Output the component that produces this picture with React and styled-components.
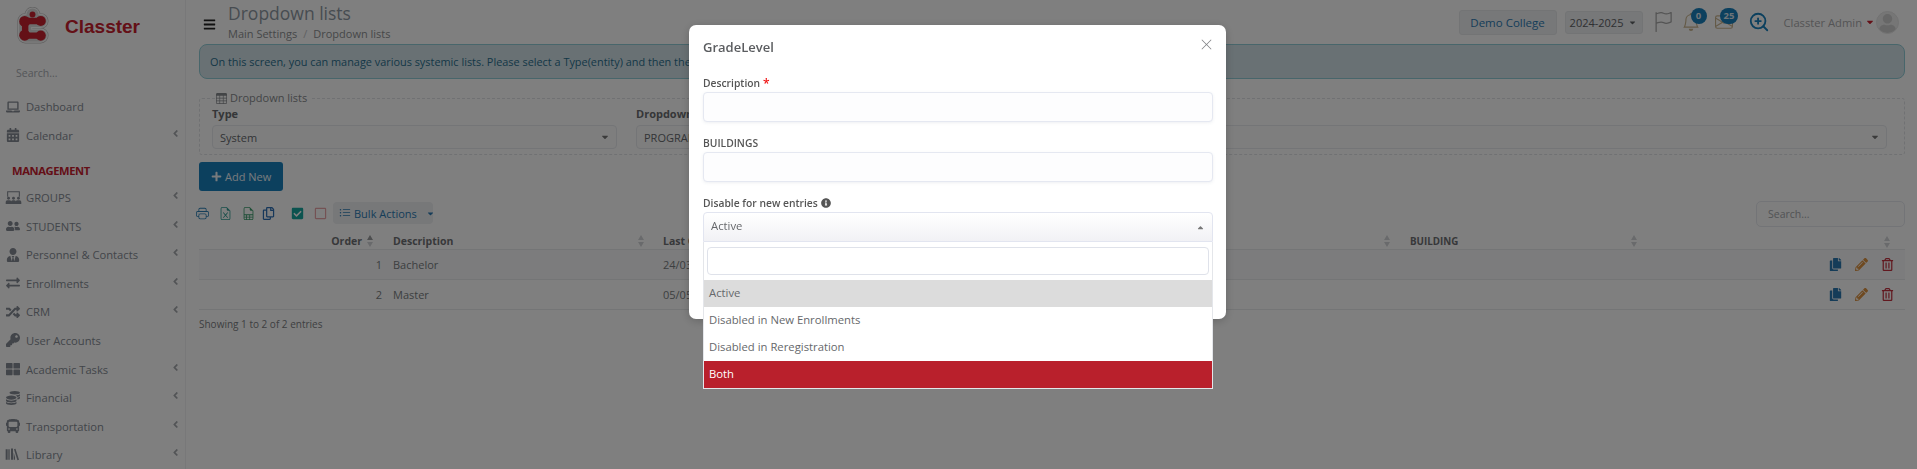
import React from "react";
import styled, { createGlobalStyle } from "styled-components";
import {
  FaAngleLeft,
  FaBars,
  FaBus,
  FaCalendarAlt,
  FaCaretDown,
  FaCaretUp,
  FaCheckSquare,
  FaCoins,
  FaCopy,
  FaExchangeAlt,
  FaInfoCircle,
  FaKey,
  FaLaptop,
  FaPencilAlt,
  FaPlus,
  FaRandom,
  FaRegCopy,
  FaRegSquare,
  FaRegTrashAlt,
  FaThLarge,
  FaUser,
  FaUserFriends,
  FaUserTie,
} from "react-icons/fa";
import {
  BsBell,
  BsEnvelope,
  BsFileEarmarkExcel,
  BsFileEarmarkSpreadsheet,
  BsFlag,
  BsListUl,
  BsPrinter,
  BsTable,
  BsXLg,
} from "react-icons/bs";
import { FiZoomIn } from "react-icons/fi";

const GroupsIcon = (props) => (
  <svg viewBox="0 0 24 18" width="17" height="13" fill="currentColor" {...props}>
    <path d="M3 0h18v8h-1.500V1.500h-15V8H3z" />
    <circle cx="5" cy="10" r="2" />
    <circle cx="12" cy="10" r="2" />
    <circle cx="19" cy="10" r="2" />
    <path d="M1 18v-3a3 3 0 0 1 3-2h2a3 3 0 0 1 3 2v3zM8.500 18v-3a3 3 0 0 1 3-2h1a3 3 0 0 1 3 2v3zM15 18v-3a3 3 0 0 1 3-2h2a3 3 0 0 1 3 2v3z" />
  </svg>
);

const BooksIcon = (props) => (
  <svg viewBox="0 0 24 18" width="16" height="13" fill="currentColor" {...props}>
    <path d="M1 1h3v16H1zM5 1h2v16H5zM9 0h3v17H9zM13.500 1l2.200-.6L21 17l-2.400.6zM13 6l2 7v4h-2z" />
  </svg>
);

const logoPath = "M25 13C20 13 14 13 8 13V29C14 29 20 29 25 29";
const dotPath = "M16 6V7";

const LogoMark = () => (
  <svg viewBox="-2 -2 36 40" width="33" height="37">
    {[
      [17, "#c4c4c4"],
      [15.500, "#fff"],
      [13, "#dcdcdc"],
    ].map(([w, c]) => (
      <g key={w} fill="none" stroke={c} strokeWidth={w} strokeLinecap="round" strokeLinejoin="round">
        <path d={logoPath} />
        <path d={dotPath} />
      </g>
    ))}
    <path d={logoPath} fill="none" stroke="#c8202f" strokeWidth="7" strokeLinejoin="round" />
    <circle cx="7.500" cy="13.500" r="6" fill="#c8202f" />
    <circle cx="7.500" cy="28.500" r="6" fill="#c8202f" />
    <circle cx="25" cy="13" r="5.500" fill="#c8202f" />
    <circle cx="25" cy="29" r="5.500" fill="#c8202f" />
    <circle cx="16" cy="6" r="3.200" fill="#c8202f" />
  </svg>
);

const GlobalStyle = createGlobalStyle`
  html, body {
    margin: 0;
    height: 100%;
    overflow: hidden;
    background: #fff;
  }
  body {
    font-family: "Open Sans", "Noto Sans", sans-serif;
    font-size: 11px;
    color: #7e8791;
  }
  * { box-sizing: border-box; }
  svg { flex-shrink: 0; }
`;

const Page = styled.div`
  display: flex;
  height: 100vh;
  overflow: hidden;
`;

const Sidebar = styled.aside`
  width: 186px;
  flex-shrink: 0;
  border-right: 1px solid #f0f0f2;
  background: #fefefe;
`;

const LogoBox = styled.div`
  display: flex;
  align-items: center;
  height: 50px;
  padding: 0 0 0 16px;
`;

const LogoText = styled.span`
  font: bold 19px "Liberation Sans", Arial, sans-serif;
  color: #c8202f;
  margin: 3px 0 0 16px;
`;

const SideSearch = styled.div`
  height: 42.500px;
  padding: 15px 0 0 16px;
  font-size: 10.500px;
  line-height: 16px;
  color: #a9adb3;
`;

const MenuRow = styled.div`
  display: flex;
  align-items: center;
  height: 28.600px;
  padding-left: 4px;
  color: #858b94;
`;

const MenuIcon = styled.span`
  display: flex;
  justify-content: center;
  width: 18px;
  margin-right: 4px;
  font-size: 14px;
`;

const MenuLabel = styled.span`
  flex: 1;
  font-size: 11.200px;
`;

const Chevron = styled.span`
  display: flex;
  margin: -4px 4px 0 0;
  font-size: 11px;
  color: #a5a8ad;
`;

const MenuHeading = styled.div`
  margin: 8.500px 0 0;
  height: 25px;
  line-height: 25px;
  padding-left: 12px;
  font-size: 11.200px;
  font-weight: 700;
  letter-spacing: -0.4px;
  color: #c8202f;
`;

const Main = styled.main`
  flex: 1;
  min-width: 0;
  padding: 0 12px 0 13px;
`;

const TopBar = styled.header`
  display: flex;
  align-items: center;
  height: 44px;
  padding-right: 6px;
`;

const Burger = styled.span`
  display: flex;
  margin: 5px 12px 0 4px;
  font-size: 13px;
  color: #222;
`;

const TitleBox = styled.div`
  flex: 1;
  margin-top: -1px;
`;

const PageTitle = styled.h1`
  margin: 0;
  font-size: 17.500px;
  font-weight: 400;
  line-height: 24px;
  color: #8e98a3;
`;

const Crumbs = styled.div`
  display: flex;
  gap: 6px;
  font-size: 11px;
  line-height: 16px;
  margin-top: 1px;
  color: #8d8f92;
`;

const CrumbSep = styled.span`
  color: #c0c2c5;
`;

const CollegeButton = styled.div`
  width: 98px;
  height: 25px;
  line-height: 24px;
  margin-right: 8px;
  text-align: center;
  font-size: 11.500px;
  color: #2d7bb3;
  background: #eef0f3;
  border: 1px solid #e6e8eb;
  border-radius: 3px;
`;

const YearButton = styled.div`
  display: flex;
  align-items: center;
  justify-content: center;
  gap: 5px;
  width: 78px;
  height: 23px;
  margin-right: 10px;
  font-size: 11px;
  color: #5f6265;
  background: #eef0f3;
  border: 1px solid #e6e8eb;
  border-radius: 3px;
  svg { font-size: 9px; }
`;

const TopIcon = styled.span`
  position: relative;
  display: flex;
  margin-right: ${(p) => p.$gap}px;
  font-size: ${(p) => p.$size}px;
  color: ${(p) => p.$color};
`;

const Badge = styled.span`
  position: absolute;
  top: -5px;
  left: ${(p) => p.$left}px;
  min-width: 16px;
  height: 16px;
  padding: 0 4px;
  border-radius: 8px;
  line-height: 16px;
  text-align: center;
  font-size: 9.500px;
  font-weight: 700;
  color: #dde8f0;
  background: #1880bd;
`;

const UserName = styled.span`
  font-size: 11.200px;
  color: #a9a9ab;
  margin-right: 3px;
`;

const UserCaret = styled.span`
  display: flex;
  margin-right: 1px;
  font-size: 10px;
  color: #c8202f;
`;

const Avatar = styled.span`
  display: flex;
  align-items: flex-end;
  justify-content: center;
  width: 23px;
  height: 23px;
  overflow: hidden;
  border-radius: 50%;
  border: 1px solid #e5e5e5;
  background: #ededed;
  color: #cfcfcf;
  font-size: 19px;
`;

const Alert = styled.div`
  height: 35px;
  line-height: 34px;
  padding-left: 10px;
  white-space: nowrap;
  overflow: hidden;
  border: 1px solid #91ccd6;
  border-radius: 8px;
  background: #d3e3e9;
  font-size: 10.900px;
  color: #2a6f8e;
`;

const Box = styled.fieldset`
  margin: 11px 0 0;
  padding: 1px 17px 6px 12px;
  height: 65px;
  border: 1px dashed #e1e3e6;
  border-radius: 3px;
`;

const BoxTitle = styled.legend`
  display: flex;
  align-items: center;
  gap: 3px;
  margin-left: 4px;
  padding: 0 4px 0 0;
  font-size: 11px;
  line-height: 16px;
  color: #878a8e;
`;

const FilterGrid = styled.div`
  display: grid;
  grid-template-columns: 405px 1fr;
  column-gap: 19px;
`;

const FilterLabel = styled.div`
  font-size: 11px;
  font-weight: 700;
  line-height: 14px;
  color: #6b6d70;
`;

const FilterSelect = styled.div`
  display: flex;
  align-items: center;
  justify-content: space-between;
  height: 24px;
  margin-top: 4px;
  padding: 0 6px 0 7px;
  border: 1px solid #e8eaee;
  border-radius: 4px;
  background: #fdfdfd;
  font-size: 11px;
  color: #66696d;
  white-space: nowrap;
  svg { font-size: 10px; color: #777; }
`;

const AddButton = styled.button`
  display: flex;
  align-items: center;
  gap: 3px;
  width: 84px;
  height: 29px;
  margin-top: 7px;
  padding: 0 0 0 12px;
  border: 0;
  border-radius: 3px;
  background: #1880bd;
  color: #eef5fa;
  font: 400 11px "Open Sans", sans-serif;
  svg { font-size: 11px; }
`;

const ToolRow = styled.div`
  display: flex;
  align-items: center;
  justify-content: space-between;
  height: 26px;
  margin-top: 9px;
`;

const Tools = styled.div`
  display: flex;
  align-items: center;
  height: 22px;
  margin-left: -7px;
`;

const ToolIcon = styled.span`
  display: flex;
  justify-content: center;
  width: ${(p) => p.$width}px;
  font-size: 13px;
  color: ${(p) => p.$color};
`;

const BulkButton = styled.div`
  display: flex;
  align-items: center;
  gap: 3px;
  width: 100px;
  height: 22px;
  margin-left: 9px;
  padding-left: 6px;
  border-radius: 4px;
  background: #eef0f3;
  font-size: 11px;
  white-space: nowrap;
  color: #2d7bb3;
  svg { font-size: 12px; }
`;

const BulkCaret = styled.span`
  display: flex;
  margin-left: 6px;
  svg { font-size: 9px; }
`;

const TableSearch = styled.div`
  width: 149px;
  height: 26px;
  line-height: 25px;
  padding-left: 11px;
  margin-top: 2px;
  border: 1px solid #e6e9ef;
  border-radius: 5px;
  background: #fdfdfd;
  font-size: 10.500px;
  color: #a4a7ab;
`;

const Table = styled.table`
  width: 100%;
  table-layout: fixed;
  border-collapse: collapse;
`;

const HeadCell = styled.th`
  height: 23px;
  padding: 0 0 1px;
  vertical-align: bottom;
  width: ${(p) => p.$width || "auto"};
  border-bottom: 1px solid #e9ebed;
`;

const HeadInner = styled.div`
  display: flex;
  align-items: center;
  justify-content: ${(p) => (p.$end ? "flex-end" : "space-between")};
  gap: 5px;
  padding: 0 ${(p) => p.$right}px 0 8px;
  font-size: 10.500px;
  font-weight: 700;
  color: #6f7174;
`;

const HeadSmall = styled.span`
  font-size: 9.800px;
`;

const Sort = styled.span`
  display: flex;
  flex-direction: column;
  gap: 2px;
`;

const Tri = styled.i`
  width: 0;
  height: 0;
  border-left: 3.500px solid transparent;
  border-right: 3.500px solid transparent;
  ${(p) =>
    p.$down
      ? "border-top: 5px solid #d3d5d8;"
      : `border-bottom: 5px solid ${p.$on ? "#9a9c9f" : "#d3d5d8"};`}
`;

const Row = styled.tr`
  height: 30px;
  background: ${(p) => (p.$odd ? "#f9f9fa" : "#fff")};
  border-bottom: 1px solid #e9ebed;
`;

const Cell = styled.td`
  padding: 0 ${(p) => (p.$num ? "3px" : "8px")} 0 8px;
  text-align: ${(p) => (p.$num ? "right" : "left")};
  font-size: 11px;
  color: #7a7e82;
`;

const ActionCell = styled.div`
  display: flex;
  align-items: center;
  justify-content: flex-end;
  gap: 13px;
  padding-right: 3px;
`;

const ActionIcon = styled.span`
  display: flex;
  font-size: 13px;
  color: ${(p) => p.$color};
`;

const Footer = styled.div`
  margin-top: 6px;
  font-size: 10px;
  line-height: 16px;
  color: #7c7f83;
`;

const Backdrop = styled.div`
  position: fixed;
  inset: 0;
  display: flex;
  justify-content: center;
  padding: 25px 2px 0 0;
  background: rgba(0, 0, 0, 0.5);
`;

const Modal = styled.div`
  width: 537px;
  height: 294px;
  padding: 0 13px 0 14px;
  border-radius: 7px;
  background: #fff;
  box-shadow: 0 2px 10px rgba(0, 0, 0, 0.2);
`;

const ModalHead = styled.div`
  display: flex;
  justify-content: space-between;
  height: 49px;
  padding-top: 12px;
`;

const ModalTitle = styled.h2`
  margin: 0;
  font-size: 13px;
  font-weight: 600;
  line-height: 20px;
  color: #5b5d60;
`;

const CloseIcon = styled.span`
  display: flex;
  height: 13px;
  margin: 1px 0 0 0;
  font-size: 13px;
  color: #808285;
`;

const FieldLabel = styled.label`
  display: flex;
  align-items: center;
  gap: 3px;
  height: 18px;
  font-size: 10.300px;
  font-weight: 600;
  color: #555;
  svg { font-size: 10px; color: #555; }
`;

const Required = styled.span`
  color: #f01010;
  font-size: 12px;
`;

const TextInput = styled.div`
  height: 30px;
  margin-bottom: 12px;
  border: 1px solid #e5e8f1;
  border-radius: 4px;
  background: #fdfdfe;
  box-shadow: 0 1px 3px rgba(120, 130, 160, 0.12);
`;

const SelectWrap = styled.div`
  position: relative;
`;

const SelectBox = styled.div`
  display: flex;
  align-items: center;
  justify-content: space-between;
  height: 30px;
  padding: 0 7px 4px 7px;
  border: 1px solid #e2e5f0;
  border-radius: 4px 4px 0 0;
  background: linear-gradient(#fff, #f1f1f5);
  font-size: 11.300px;
  color: #66686b;
  svg { font-size: 9px; color: #777; margin-top: 4px; }
`;

const Dropdown = styled.div`
  position: absolute;
  top: 30px;
  left: 0;
  right: 0;
  border: 1px solid #e4e6ea;
  border-top: 0;
  background: #fff;
`;

const DropSearchRow = styled.div`
  padding: 5px 3px 5px 3px;
`;

const DropSearch = styled.div`
  height: 28px;
  border: 1px solid #dfe2ea;
  border-radius: 4px;
  background: #fff;
`;

const Option = styled.div`
  height: 27px;
  line-height: 26px;
  padding-left: 5px;
  font-size: 11.300px;
  background: ${(p) => (p.$active ? "#dcdcdc" : p.$hover ? "#b9202c" : "#fff")};
  color: ${(p) => (p.$hover ? "#fff" : "#66686b")};
`;

const menuTop = [
  { label: "Dashboard", icon: <FaLaptop /> },
  { label: "Calendar", icon: <FaCalendarAlt />, more: true },
];

const menuBottom = [
  { label: "GROUPS", icon: <GroupsIcon />, more: true },
  { label: "STUDENTS", icon: <FaUserFriends />, more: true },
  { label: "Personnel & Contacts", icon: <FaUserTie />, more: true },
  { label: "Enrollments", icon: <FaExchangeAlt />, more: true },
  { label: "CRM", icon: <FaRandom />, more: true },
  { label: "User Accounts", icon: <FaKey />, more: false },
  { label: "Academic Tasks", icon: <FaThLarge />, more: true },
  { label: "Financial", icon: <FaCoins />, more: true },
  { label: "Transportation", icon: <FaBus />, more: true },
  { label: "Library", icon: <BooksIcon />, more: true },
];

const MenuItem = ({ item }) => (
  <MenuRow>
    <MenuIcon>{item.icon}</MenuIcon>
    <MenuLabel>{item.label}</MenuLabel>
    {item.more && (
      <Chevron>
        <FaAngleLeft />
      </Chevron>
    )}
  </MenuRow>
);

const SortIcon = ({ on }) => (
  <Sort>
    <Tri $on={on} />
    <Tri $down />
  </Sort>
);

const rows = [
  { order: 1, name: "Bachelor", date: "24/03/2024" },
  { order: 2, name: "Master", date: "05/05/2024" },
];

const App = () => (
  <>
    <GlobalStyle />
    <Page>
      <Sidebar>
        <LogoBox>
          <LogoMark />
          <LogoText>Classter</LogoText>
        </LogoBox>
        <SideSearch>Search...</SideSearch>
        {menuTop.map((item) => (
          <MenuItem key={item.label} item={item} />
        ))}
        <MenuHeading>MANAGEMENT</MenuHeading>
        {menuBottom.map((item) => (
          <MenuItem key={item.label} item={item} />
        ))}
      </Sidebar>

      <Main>
        <TopBar>
          <Burger>
            <FaBars />
          </Burger>
          <TitleBox>
            <PageTitle>Dropdown lists</PageTitle>
            <Crumbs>
              <span>Main Settings</span>
              <CrumbSep>/</CrumbSep>
              <span>Dropdown lists</span>
            </Crumbs>
          </TitleBox>
          <CollegeButton>Demo College</CollegeButton>
          <YearButton>
            2024-2025 <FaCaretDown />
          </YearButton>
          <TopIcon $size={20} $gap={9} $color="#a8a8a8">
            <BsFlag />
          </TopIcon>
          <TopIcon $size={18} $gap={15} $color="#c9b48f">
            <BsBell />
            <Badge $left={9}>0</Badge>
          </TopIcon>
          <TopIcon $size={18} $gap={15} $color="#c9b48f">
            <BsEnvelope />
            <Badge $left={5}>25</Badge>
          </TopIcon>
          <TopIcon $size={22} $gap={14} $color="#1880bd">
            <FiZoomIn />
          </TopIcon>
          <UserName>Classter Admin</UserName>
          <UserCaret>
            <FaCaretDown />
          </UserCaret>
          <Avatar>
            <FaUser />
          </Avatar>
        </TopBar>

        <Alert>
          On this screen, you can manage various systemic lists. Please select a Type(entity) and then the Dropdown list you want to edit.
        </Alert>

        <Box>
          <BoxTitle>
            <BsTable /> Dropdown lists
          </BoxTitle>
          <FilterGrid>
            <div>
              <FilterLabel>Type</FilterLabel>
              <FilterSelect>
                System <FaCaretDown />
              </FilterSelect>
            </div>
            <div>
              <FilterLabel>Dropdown list</FilterLabel>
              <FilterSelect>
                PROGRAMS <FaCaretDown />
              </FilterSelect>
            </div>
          </FilterGrid>
        </Box>

        <AddButton>
          <FaPlus /> Add New
        </AddButton>

        <ToolRow>
          <Tools>
            <ToolIcon $width={20} $color="#2c7fb5"><BsPrinter /></ToolIcon>
            <ToolIcon $width={26} $color="#2f9c93"><BsFileEarmarkExcel /></ToolIcon>
            <ToolIcon $width={20} $color="#3a9c6c"><BsFileEarmarkSpreadsheet /></ToolIcon>
            <ToolIcon $width={20} $color="#2c6fb5"><FaRegCopy /></ToolIcon>
            <ToolIcon $width={38} $color="#16a79f"><FaCheckSquare /></ToolIcon>
            <ToolIcon $width={8} $color="#e8a5a9"><FaRegSquare /></ToolIcon>
            <BulkButton>
              <BsListUl /> Bulk Actions
              <BulkCaret>
                <FaCaretDown />
              </BulkCaret>
            </BulkButton>
          </Tools>
          <TableSearch>Search...</TableSearch>
        </ToolRow>

        <Table>
          <thead>
            <tr>
              <HeadCell $width="186px">
                <HeadInner $end $right={12}>
                  Order <SortIcon on />
                </HeadInner>
              </HeadCell>
              <HeadCell $width="270px">
                <HeadInner $right={11}>
                  Description <SortIcon />
                </HeadInner>
              </HeadCell>
              <HeadCell $width="747px">
                <HeadInner $right={12}>
                  Last Change <SortIcon />
                </HeadInner>
              </HeadCell>
              <HeadCell $width="243px">
                <HeadInner $right={8}>
                  <HeadSmall>BUILDING</HeadSmall> <SortIcon />
                </HeadInner>
              </HeadCell>
              <HeadCell>
                <HeadInner $right={15}>
                  <span />
                  <SortIcon />
                </HeadInner>
              </HeadCell>
            </tr>
          </thead>
          <tbody>
            {rows.map((row, i) => (
              <Row key={row.order} $odd={i === 0}>
                <Cell $num>{row.order}</Cell>
                <Cell>{row.name}</Cell>
                <Cell>{row.date}</Cell>
                <Cell />
                <Cell>
                  <ActionCell>
                    <ActionIcon $color="#2a78b0"><FaCopy /></ActionIcon>
                    <ActionIcon $color="#dd9240"><FaPencilAlt /></ActionIcon>
                    <ActionIcon $color="#c4303e"><FaRegTrashAlt /></ActionIcon>
                  </ActionCell>
                </Cell>
              </Row>
            ))}
          </tbody>
        </Table>

        <Footer>Showing 1 to 2 of 2 entries</Footer>
      </Main>
    </Page>

    <Backdrop>
      <Modal>
        <ModalHead>
          <ModalTitle>GradeLevel</ModalTitle>
          <CloseIcon>
            <BsXLg />
          </CloseIcon>
        </ModalHead>
        <FieldLabel>
          Description <Required>*</Required>
        </FieldLabel>
        <TextInput />
        <FieldLabel>BUILDINGS</FieldLabel>
        <TextInput />
        <FieldLabel>
          Disable for new entries <FaInfoCircle />
        </FieldLabel>
        <SelectWrap>
          <SelectBox>
            Active <FaCaretUp />
          </SelectBox>
          <Dropdown>
            <DropSearchRow>
              <DropSearch />
            </DropSearchRow>
            <Option $active>Active</Option>
            <Option>Disabled in New Enrollments</Option>
            <Option>Disabled in Reregistration</Option>
            <Option $hover>Both</Option>
          </Dropdown>
        </SelectWrap>
      </Modal>
    </Backdrop>
  </>
);

export default App;
